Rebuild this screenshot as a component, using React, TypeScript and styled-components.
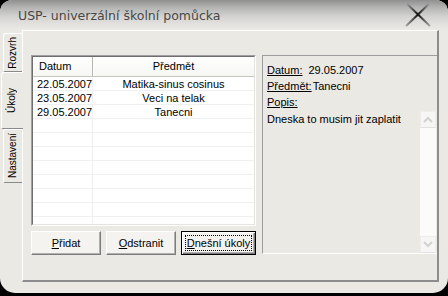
import React from 'react';
import styled, { createGlobalStyle } from 'styled-components';

const UI_FONT = `'Liberation Sans', Arial, sans-serif`;
const FACE = '#ebe9e4';

type Task = { date: string; subject: string };

const tasks: Task[] = [
  { date: '22.05.2007', subject: 'Matika-sinus cosinus' },
  { date: '23.05.2007', subject: 'Veci na telak' },
  { date: '29.05.2007', subject: 'Tanecni' },
];

const ROW_COUNT = 11;

export default function App(): React.JSX.Element {
  const rows: (Task | null)[] = Array.from({ length: ROW_COUNT }, (_, i) => tasks[i] ?? null);
  const selected = tasks[2];

  return (
    <>
      <GlobalStyle />
      <StyledWindow>
        <StyledTitleBar>
          <StyledTitle>USP- univerzální školní pomůcka</StyledTitle>
          <CloseIcon />
        </StyledTitleBar>
        <StyledBody>
          <StyledTabStrip>
            <StyledTab $h={39}>
              <StyledTabText>Rozvrh</StyledTabText>
            </StyledTab>
            <StyledTab $h={57} $active>
              <StyledTabText>Úkoly</StyledTabText>
            </StyledTab>
            <StyledTab $h={54}>
              <StyledTabText>Nastavení</StyledTabText>
            </StyledTab>
          </StyledTabStrip>
          <StyledTabPanel>
            <StyledLeftColumn>
              <StyledListOuter>
                <StyledListInner>
                  <StyledHeaderRow>
                    <StyledHeaderCell>Datum</StyledHeaderCell>
                    <StyledHeaderCell $center>Předmět</StyledHeaderCell>
                  </StyledHeaderRow>
                  {rows.map((row, i) => (
                    <StyledRow key={i}>
                      <StyledCell $first>{row?.date}</StyledCell>
                      <StyledCell $center>{row?.subject}</StyledCell>
                    </StyledRow>
                  ))}
                </StyledListInner>
              </StyledListOuter>
              <StyledButtonRow>
                <StyledButton $w={70}>
                  <u>P</u>řidat
                </StyledButton>
                <StyledButton $w={70}>
                  <u>O</u>dstranit
                </StyledButton>
                <StyledButton $w={75} $default>
                  <StyledFocus>
                    <u>D</u>nešní úkoly
                  </StyledFocus>
                </StyledButton>
              </StyledButtonRow>
            </StyledLeftColumn>
            <StyledDetail>
              <StyledDetailLine>
                <StyledLabel>Datum:</StyledLabel>
                <StyledValue $gap={6}>{selected.date}</StyledValue>
              </StyledDetailLine>
              <StyledDetailLine>
                <StyledLabel>Předmět:</StyledLabel>
                <StyledValue $gap={1}>{selected.subject}</StyledValue>
              </StyledDetailLine>
              <StyledDetailLine>
                <StyledLabel>Popis:</StyledLabel>
              </StyledDetailLine>
              <StyledDescription>
                <StyledDescText>Dneska to musim jit zaplatit</StyledDescText>
                <StyledScrollBar>
                  <StyledScrollButton>
                    <Chevron up />
                  </StyledScrollButton>
                  <StyledScrollButton>
                    <Chevron />
                  </StyledScrollButton>
                </StyledScrollBar>
              </StyledDescription>
            </StyledDetail>
          </StyledTabPanel>
        </StyledBody>
      </StyledWindow>
    </>
  );
}

const CloseIcon = (): React.JSX.Element => (
  <svg width="26" height="25" viewBox="0 0 26 25">
    <defs>
      <linearGradient id="xfade" x1="0" y1="0" x2="26" y2="0" gradientUnits="userSpaceOnUse">
        <stop offset="0" stopColor="#b4b4b4" />
        <stop offset="0.5" stopColor="#111" />
        <stop offset="1" stopColor="#b4b4b4" />
      </linearGradient>
    </defs>
    <line x1="1" y1="1" x2="25" y2="24" stroke="url(#xfade)" strokeWidth="2" />
    <line x1="25" y1="1" x2="1" y2="24" stroke="url(#xfade)" strokeWidth="2" />
  </svg>
);

const Chevron = ({ up }: { up?: boolean }): React.JSX.Element => (
  <svg width="10" height="7" viewBox="0 0 10 7">
    <polyline
      points={up ? '1,6 5,2 9,6' : '1,1 5,5 9,1'}
      fill="none"
      stroke="#d2d2d2"
      strokeWidth="2"
    />
  </svg>
);

const GlobalStyle = createGlobalStyle`
  html, body {
    margin: 0;
    padding: 0;
    background: #000;
  }
  body {
    width: 448px;
    height: 296px;
    overflow: hidden;
  }
`;

const StyledWindow = styled.div`
  width: 448px;
  height: 293px;
  display: flex;
  flex-direction: column;
  background: ${FACE};
  border-radius: 12px 12px 15px 15px;
  overflow: hidden;
  font-family: ${UI_FONT};
  font-size: 11px;
  color: #000;
`;

const StyledTitleBar = styled.div`
  flex: none;
  height: 29px;
  display: flex;
  align-items: center;
  justify-content: space-between;
  padding: 0 17px 0 18px;
  background: linear-gradient(
    to bottom,
    #8f8f8f 0%,
    #b3b3b1 25%,
    #d2d1cf 55%,
    #e3e2df 85%,
    #e9e8e4 100%
  );
`;

const StyledTitle = styled.span`
  font-family: 'DejaVu Sans', Verdana, sans-serif;
  font-size: 12.5px;
  color: #474747;
  padding-top: 1px;
`;

const StyledBody = styled.div`
  flex: 1;
  display: flex;
  padding-top: 1px;
`;

const StyledTabStrip = styled.div`
  flex: none;
  width: 22px;
  display: flex;
  flex-direction: column;
  padding-top: 3px;
`;

const StyledTab = styled.div<{ $h: number; $active?: boolean }>`
  position: relative;
  z-index: ${(p) => (p.$active ? 1 : 0)};
  box-sizing: border-box;
  height: ${(p) => p.$h}px;
  width: ${(p) => (p.$active ? 22 : 19)}px;
  margin-left: ${(p) => (p.$active ? 1 : 3)}px;
  display: flex;
  align-items: center;
  justify-content: center;
  background: ${FACE};
  border-left: 1px solid #fff;
  border-top: 1px solid #fff;
  border-bottom: 1px solid #8a8a8a;
  border-radius: 3px 0 0 2px;
  padding-right: ${(p) => (p.$active ? 1 : 0)}px;
`;

const StyledTabText = styled.span`
  writing-mode: vertical-rl;
  transform: rotate(180deg);
  white-space: nowrap;
  font-size: 10px;
  line-height: 12px;
`;

const StyledTabPanel = styled.div`
  box-sizing: border-box;
  width: 417px;
  height: 252px;
  border-top: 1px solid #fff;
  border-left: 1px solid #fff;
  border-right: 2px solid #8d8d8d;
  border-bottom: 2px solid #8d8d8d;
  padding: 24px 0 0 8px;
  display: grid;
  grid-template-columns: 225px 1fr;
  column-gap: 6px;
  align-items: start;
`;

const StyledLeftColumn = styled.div`
  display: flex;
  flex-direction: column;
  gap: 5px;
`;

const StyledListOuter = styled.div`
  box-sizing: border-box;
  height: 171px;
  border-top: 1px solid #a0a0a0;
  border-left: 1px solid #a0a0a0;
  border-right: 1px solid #fff;
  border-bottom: 1px solid #fff;
`;

const StyledListInner = styled.div`
  box-sizing: border-box;
  height: 100%;
  overflow: hidden;
  background: #fff;
  border-top: 1px solid #6e6e6e;
  border-left: 1px solid #6e6e6e;
  border-right: 1px solid #e4e3df;
  border-bottom: 1px solid #e4e3df;
`;

const StyledHeaderRow = styled.div`
  display: grid;
  grid-template-columns: 60px 1fr;
  height: 19px;
  background: linear-gradient(#ffffff, #f6f6f4);
  border-bottom: 1px solid #c6c5c0;
`;

const StyledHeaderCell = styled.div<{ $center?: boolean }>`
  line-height: 18px;
  padding-left: ${(p) => (p.$center ? 0 : 6)}px;
  text-align: ${(p) => (p.$center ? 'center' : 'left')};
  border-right: ${(p) => (p.$center ? 'none' : '1px solid #b5b4ae')};
  box-shadow: ${(p) => (p.$center ? 'inset 1px 0 #fff' : 'none')};
`;

const StyledRow = styled.div`
  display: grid;
  grid-template-columns: 60px 1fr;
  height: 14px;
`;

const StyledCell = styled.div<{ $first?: boolean; $center?: boolean }>`
  line-height: 15px;
  height: 13px;
  border-bottom: 1px solid #f0f0f0;
  border-right: ${(p) => (p.$first ? '1px solid #f0f0f0' : 'none')};
  padding-left: ${(p) => (p.$first ? 4 : 0)}px;
  text-align: ${(p) => (p.$center ? 'center' : 'left')};
  white-space: nowrap;
`;

const StyledButtonRow = styled.div`
  display: flex;
  justify-content: space-between;
`;

const StyledButton = styled.button<{ $w: number; $default?: boolean }>`
  box-sizing: border-box;
  width: ${(p) => p.$w}px;
  height: 24px;
  padding: 0;
  display: flex;
  align-items: center;
  justify-content: center;
  font-family: ${UI_FONT};
  font-size: 11px;
  color: #000;
  background: #f4f3f0;
  border: 1px solid;
  border-color: ${(p) => (p.$default ? '#000' : '#fff #7c7c7c #7c7c7c #fff')};
  box-shadow: ${(p) =>
    p.$default
      ? 'inset 1px 1px #fff, inset -1px -1px #7c7c7c, inset -2px -2px #b0b0b0'
      : 'inset -1px -1px #b0b0b0'};
`;

const StyledFocus = styled.span`
  box-sizing: border-box;
  width: calc(100% - 6px);
  height: calc(100% - 6px);
  display: flex;
  align-items: center;
  justify-content: center;
  border: 1px dotted #000;
`;

const StyledDetail = styled.div`
  box-sizing: border-box;
  height: 199px;
  display: flex;
  flex-direction: column;
  padding-top: 6px;
  border-top: 1px solid #9d9d9d;
  border-left: 1px solid #9d9d9d;
  border-bottom: 1px solid #fff;
`;

const StyledDetailLine = styled.div`
  display: flex;
  height: 16px;
  line-height: 16px;
  padding-left: 4px;
`;

const StyledLabel = styled.span`
  text-decoration: underline;
`;

const StyledValue = styled.span<{ $gap: number }>`
  margin-left: ${(p) => p.$gap}px;
`;

const StyledDescription = styled.div`
  flex: 1;
  display: flex;
  padding-top: 1px;
`;

const StyledDescText = styled.div`
  flex: 1;
  padding-left: 4px;
  line-height: 16px;
`;

const StyledScrollBar = styled.div`
  flex: none;
  width: 16px;
  margin-right: 1px;
  display: flex;
  flex-direction: column;
  justify-content: space-between;
  background: #fbfbfa;
`;

const StyledScrollButton = styled.div`
  box-sizing: border-box;
  height: 17px;
  display: flex;
  align-items: center;
  justify-content: center;
  background: #f6f6f5;
  border: 1px solid #ededeb;
  border-bottom-color: #e0e0de;
`;
